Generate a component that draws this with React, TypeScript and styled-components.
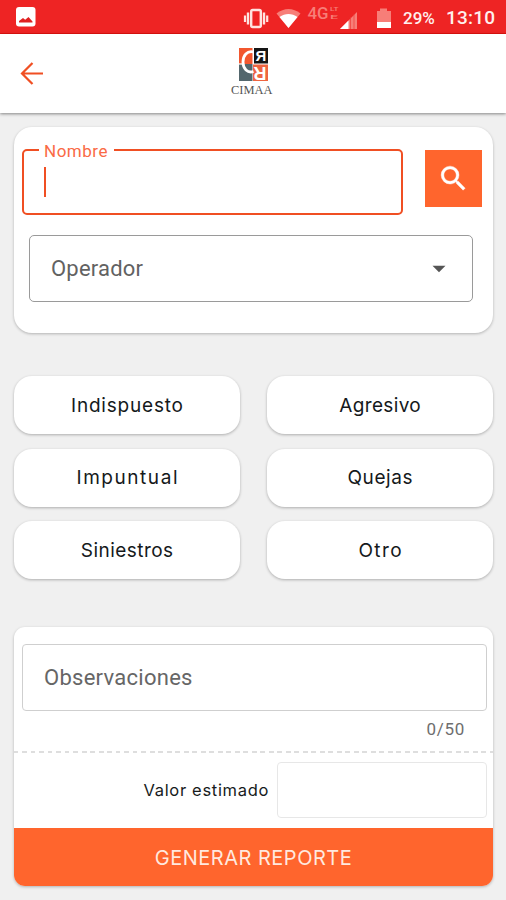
import React from "react";
import styled, { createGlobalStyle } from "styled-components";

const ORANGE = "#ff652d";
const ACCENT = "#f04f23";

const GlobalStyle = createGlobalStyle`
  *, *::before, *::after { box-sizing: border-box; }
  body { margin: 0; background: #f0f0f0; font-family: Roboto, "Noto Sans", sans-serif; }
  button { border: 0; padding: 0; font: inherit; cursor: pointer; }
`;

const Screen = styled.div`
  width: 506px;
  height: 900px;
  display: flex;
  flex-direction: column;
  overflow: hidden;
  background: #f0f0f0;
`;

const StatusBar = styled.div`
  height: 34px;
  flex: none;
  display: flex;
  align-items: center;
  justify-content: space-between;
  padding: 0 11px 0 16px;
  background: #ee2424;
  border-bottom: 1px solid #e3120f;
  color: #fff0ee;
  svg { display: block; }
`;

const StatusGroup = styled.div`
  display: flex;
  align-items: center;
`;

const Battery = styled.span`
  margin-left: 10px;
  width: 33px;
  font-size: 17px;
  font-weight: 500;
  line-height: 32px;
  padding-top: 2px;
`;

const Clock = styled.span`
  margin-left: 10px;
  width: 49px;
  font-size: 19px;
  font-weight: 500;
  letter-spacing: 0.2px;
  line-height: 32px;
  padding-top: 3px;
`;

const Header = styled.header`
  height: 79px;
  flex: none;
  display: grid;
  grid-template-columns: 1fr 60px 1fr;
  padding: 0 23px 0 20px;
  background: #fff;
  box-shadow: 0 1px 3px rgba(0, 0, 0, 0.45);
`;

const BackButton = styled.button`
  width: 24px;
  height: 24px;
  margin-top: 27px;
  background: none;
  svg { display: block; }
`;

const Brand = styled.div`
  display: flex;
  justify-content: center;
  padding-top: 12px;
  svg { display: block; }
`;

const Content = styled.main`
  display: flex;
  flex-direction: column;
  padding: 14px 13px 0 14px;
`;

const Card = styled.section<{ $radius: number }>`
  display: flex;
  flex-direction: column;
  border-radius: ${(p) => p.$radius}px;
  background: #fff;
  box-shadow: 0 1px 3px rgba(0, 0, 0, 0.26);
`;

const SearchCard = styled(Card)`
  height: 206px;
  padding: 22px 11px 0 8px;
`;

const NameRow = styled.div`
  display: flex;
  justify-content: space-between;
`;

const NameField = styled.div`
  position: relative;
  width: 381px;
  height: 66px;
  padding: 16px 20px;
  border: 2px solid ${ACCENT};
  border-radius: 5px;
`;

const FloatingLabel = styled.label`
  position: absolute;
  top: -10px;
  left: 15px;
  padding: 0 6px 0 5px;
  background: #fff;
  color: #fa6a45;
  font-size: 17px;
  line-height: 20px;
  letter-spacing: 0.5px;
`;

const Caret = styled.span`
  display: block;
  width: 2px;
  height: 30px;
  background: ${ACCENT};
`;

const SearchButton = styled.button`
  width: 57px;
  height: 57px;
  margin-top: 1px;
  display: flex;
  align-items: center;
  justify-content: center;
  background: ${ORANGE};
  color: #fff;
`;

const Select = styled.div`
  width: 444px;
  height: 67px;
  margin: 20px 0 0 7px;
  padding: 0 26px 0 21px;
  display: flex;
  align-items: center;
  justify-content: space-between;
  border: 1px solid #9a9a9a;
  border-radius: 5px;
  color: #626262;
  font-size: 22px;
  letter-spacing: 0.2px;
`;

const Reasons = styled.div`
  display: grid;
  grid-template-columns: 226px 226px;
  grid-auto-rows: 58px;
  justify-content: space-between;
  row-gap: 14.5px;
  margin: 43px 0 48px;
`;

const Reason = styled.button<{ $spacing: number }>`
  border-radius: 18px;
  background: #fff;
  box-shadow: 0 1px 3px rgba(0, 0, 0, 0.28);
  color: #15191b;
  font-family: Inter, sans-serif;
  font-size: 19px;
  letter-spacing: ${(p) => p.$spacing}px;
  text-indent: ${(p) => p.$spacing}px;
`;

const ReportCard = styled(Card)`
  height: 259px;
  overflow: hidden;
`;

const Notes = styled.div`
  height: 67px;
  margin: 17px 6px 0 8px;
  padding: 0 21px;
  display: flex;
  align-items: center;
  border: 1px solid #cfcfcf;
  border-radius: 4px;
  color: #666;
  font-size: 22px;
  letter-spacing: 0.27px;
`;

const Counter = styled.div`
  height: 40px;
  padding: 8px 28px 0 0;
  text-align: right;
  color: #6e6e6e;
  font-size: 17px;
  line-height: 20px;
  letter-spacing: 0.7px;
`;

const Divider = styled.div`
  height: 2px;
  background: repeating-linear-gradient(90deg, #dedede 0 4.5px, #fff 4.5px 8.5px);
`;

const ValueRow = styled.div`
  flex: 1;
  display: flex;
  align-items: center;
  justify-content: flex-end;
  gap: 8px;
  padding: 0 6px 2px 0;
`;

const ValueLabel = styled.span`
  color: #171b1c;
  font-family: Inter, sans-serif;
  font-size: 16.5px;
  letter-spacing: 0.68px;
`;

const ValueField = styled.div`
  width: 210px;
  height: 56px;
  border: 1px solid #e7e7e7;
  border-radius: 4px;
`;

const SubmitButton = styled.button`
  height: 58px;
  flex: none;
  padding-top: 2px;
  background: ${ORANGE};
  color: #ffe9df;
  font-family: Inter, sans-serif;
  font-size: 20px;
  letter-spacing: 0.5px;
`;

const PhotoIcon = () => (
  <svg width="20" height="20" viewBox="0 0 20 20">
    <rect width="19.5" height="19.5" rx="3" fill="#fff" />
    <path d="M3 15.500v-1.500l4-3 2.200 1.800 3.300-2.800 4 4.500v1z" fill="#e02020" />
  </svg>
);

const StatusIcons = () => (
  <svg width="150" height="32" viewBox="243 0 150 32">
    <g fill="none" stroke="#ffe3e0" strokeWidth="2.4">
      <rect x="251.200" y="9" width="9.600" height="17" rx="1.500" fill="#ee2424" />
      <path d="M248 11.500v12M264 11.500v12" />
      <path d="M245 14.500v6.500M267.200 14.500v6.500" strokeWidth="2.200" />
    </g>
    <path d="M276.500 12.400C284 6.400 293 6.400 300.500 12.400L288.500 27z" fill="#f77e78" />
    <path d="M279.500 16C285 12 292 12 297.500 16L288.500 27z" fill="#fff" />
    <g fill="#f77e78" fontFamily="Roboto, sans-serif" fontWeight="500">
      <text x="307.500" y="17.500" fontSize="17" textLength="21" lengthAdjust="spacingAndGlyphs">4G</text>
      <text x="330" y="10" fontSize="6" textLength="8.500" lengthAdjust="spacingAndGlyphs">LT</text>
      <text x="330" y="18" fontSize="6" textLength="8" lengthAdjust="spacingAndGlyphs">E</text>
    </g>
    <path d="M357 11v17h-17z" fill="#f77e78" />
    <path d="M348.500 19.500V28H340z" fill="#fff" />
    <path d="M350.500 16v12M354 13v15" stroke="#ee3a38" strokeWidth=".7" />
    <path d="M377 10h3V7.500h7V10h4v12h-14z" fill="#f77e78" />
    <path d="M377 21h14v6h-14z" fill="#fff" />
  </svg>
);

const BackIcon = () => (
  <svg width="24" height="24" viewBox="0 0 24 24" fill="none" stroke={ACCENT} strokeWidth="2.2">
    <path d="M23 12.500H2.500M12.500 2 2 12.500 12.500 23" />
  </svg>
);

const SearchIcon = () => (
  <svg width="33" height="33" viewBox="0 0 24 24" fill="currentColor">
    <path
      stroke="currentColor"
      strokeWidth=".3"
      d="M15.500 14h-.79l-.28-.27A6.471 6.471 0 0 0 16 9.500 6.500 6.500 0 1 0 9.500 16c1.610 0 3.090-.590 4.230-1.570l.270.280v.790l5 4.990L20.490 19l-4.990-5zm-6 0C7.010 14 5 11.990 5 9.500S7.010 5 9.500 5 14 7.010 14 9.500 11.990 14 9.500 14z"
    />
  </svg>
);

const ArrowDownIcon = () => (
  <svg width="14" height="8" viewBox="0 0 14 8">
    <path d="M.5 .8h13L7 7.300z" fill="#555" />
  </svg>
);

const Logo = () => (
  <svg width="44" height="52" viewBox="230 46 44 52">
    <path d="M239 48h13.500v16H239z" fill="#f2572f" />
    <path d="M239 64h13.500v17H239z" fill="#53676d" />
    <path d="M254 48h14v15.500h-14z" fill="#151515" />
    <path d="M253 64.500h15V81h-15z" fill="#ee6541" />
    <path d="M253.500 52c-6.500-1.500-10.500 3.500-10.500 10s4.500 11.500 10.500 9.500" fill="none" stroke="#fff" strokeWidth="2.800" />
    <path d="M239 64h4.500" stroke="#fff" strokeWidth="1.200" />
    <g fill="#fff" fontFamily="Liberation Sans, sans-serif" fontWeight="700" textAnchor="middle">
      <text x="261" y="61" fontSize="15">Я</text>
      <text fontSize="18" transform="translate(260 66.500) scale(1 -1)">Я</text>
    </g>
    <text x="231" y="93.500" fontFamily="Liberation Serif, serif" fontSize="12.500" textLength="41.500" lengthAdjust="spacingAndGlyphs" fill="#555">
      CIMAA
    </text>
  </svg>
);

const reasons = [
  { label: "Indispuesto", spacing: 0.8 },
  { label: "Agresivo", spacing: 0.35 },
  { label: "Impuntual", spacing: 1.55 },
  { label: "Quejas", spacing: 0.6 },
  { label: "Siniestros", spacing: 0.45 },
  { label: "Otro", spacing: 1.4 },
];

export default function App() {
  return (
    <>
      <GlobalStyle />
      <Screen>
        <StatusBar>
          <PhotoIcon />
          <StatusGroup>
            <StatusIcons />
            <Battery>29%</Battery>
            <Clock>13:10</Clock>
          </StatusGroup>
        </StatusBar>
        <Header>
          <BackButton aria-label="Volver">
            <BackIcon />
          </BackButton>
          <Brand>
            <Logo />
          </Brand>
        </Header>
        <Content>
          <SearchCard $radius={18}>
            <NameRow>
              <NameField>
                <FloatingLabel>Nombre</FloatingLabel>
                <Caret />
              </NameField>
              <SearchButton aria-label="Buscar">
                <SearchIcon />
              </SearchButton>
            </NameRow>
            <Select>
              <span>Operador</span>
              <ArrowDownIcon />
            </Select>
          </SearchCard>
          <Reasons>
            {reasons.map((r) => (
              <Reason key={r.label} $spacing={r.spacing}>
                {r.label}
              </Reason>
            ))}
          </Reasons>
          <ReportCard $radius={11}>
            <Notes>Observaciones</Notes>
            <Counter>0/50</Counter>
            <Divider />
            <ValueRow>
              <ValueLabel>Valor estimado</ValueLabel>
              <ValueField />
            </ValueRow>
            <SubmitButton>GENERAR REPORTE</SubmitButton>
          </ReportCard>
        </Content>
      </Screen>
    </>
  );
}
